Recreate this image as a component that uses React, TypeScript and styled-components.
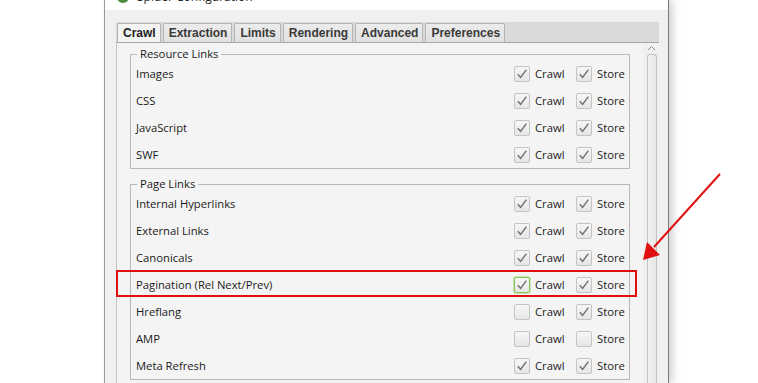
import React from 'react';
import styled, { createGlobalStyle } from 'styled-components';

const GlobalStyle = createGlobalStyle`
  html, body {
    margin: 0;
    padding: 0;
    background: #fff;
  }
  body {
    font-family: 'Open Sans', 'Noto Sans', sans-serif;
  }
`;

type Row = { label: string; crawl: boolean; store: boolean; focused?: boolean };

const resourceLinks: Row[] = [
  { label: 'Images', crawl: true, store: true },
  { label: 'CSS', crawl: true, store: true },
  { label: 'JavaScript', crawl: true, store: true },
  { label: 'SWF', crawl: true, store: true },
];

const pageLinks: Row[] = [
  { label: 'Internal Hyperlinks', crawl: true, store: true },
  { label: 'External Links', crawl: true, store: true },
  { label: 'Canonicals', crawl: true, store: true },
  { label: 'Pagination (Rel Next/Prev)', crawl: true, store: true, focused: true },
  { label: 'Hreflang', crawl: false, store: true },
  { label: 'AMP', crawl: false, store: false },
  { label: 'Meta Refresh', crawl: true, store: true },
];

const tabs = ['Crawl', 'Extraction', 'Limits', 'Rendering', 'Advanced', 'Preferences'];

function CheckBox({ checked, focused }: { checked: boolean; focused?: boolean }) {
  return (
    <Box $focused={focused}>
      {checked && (
        <svg width="12" height="12" viewBox="0 0 12 12">
          <path d="M1.8 6.2 L4.6 9.4 L10.4 1.6" fill="none" stroke="#6f6f6f" strokeWidth="1.4" />
        </svg>
      )}
    </Box>
  );
}

function Group({ title, rows }: { title: string; rows: Row[] }) {
  return (
    <Fieldset>
      <Legend>{title}</Legend>
      {rows.map(row => (
        <OptionRow key={row.label}>
          <RowLabel>{row.label}</RowLabel>
          <Option $width={62}>
            <CheckBox checked={row.crawl} focused={row.focused} />
            <span>Crawl</span>
          </Option>
          <Option $width={53}>
            <CheckBox checked={row.store} />
            <span>Store</span>
          </Option>
        </OptionRow>
      ))}
    </Fieldset>
  );
}

export default function App() {
  return (
    <Page>
      <GlobalStyle />
      <Window>
        <TitleBar>
          <TitleText>
            <TitleIcon />
            Spider Configuration
          </TitleText>
        </TitleBar>
        <WindowBody>
          <TabBar>
            {tabs.map((t, i) => (
              <Tab key={t} $active={i === 0}>
                {t}
              </Tab>
            ))}
          </TabBar>
          <TabPanel>
            <ScrollContent>
              <Group title="Resource Links" rows={resourceLinks} />
              <Group title="Page Links" rows={pageLinks} />
            </ScrollContent>
            <ScrollBar>
              <svg width="9" height="6" viewBox="0 0 9 6">
                <path d="M1 5 L4.5 1.5 L8 5" fill="none" stroke="#8a8a8a" strokeWidth="1" />
              </svg>
              <Thumb />
            </ScrollBar>
          </TabPanel>
        </WindowBody>
      </Window>
      <Highlight />
      <Arrow width="100" height="100" viewBox="0 0 100 100">
        <line x1="96" y1="2" x2="30" y2="75" stroke="#e01010" strokeWidth="2" />
        <polygon points="19,88 23,70 36,83" fill="#e01010" />
      </Arrow>
    </Page>
  );
}

const Page = styled.div`
  position: relative;
  width: 758px;
  height: 383px;
  overflow: hidden;
  background: #fff;
`;

const Window = styled.div`
  margin-left: 104px;
  width: 563px;
  height: 383px;
  display: flex;
  flex-direction: column;
  border-left: 1px solid #9a9a9a;
  border-right: 1px solid #7a7a7a;
  box-shadow: 4px 0 8px rgba(0, 0, 0, 0.18);
  background: #f0f0f0;
`;

const TitleBar = styled.div`
  height: 10px;
  overflow: hidden;
  background: #fff;
  border-bottom: 1px solid #ececec;
`;

const TitleText = styled.div`
  margin-top: -11px;
  padding-left: 12px;
  display: flex;
  align-items: center;
  gap: 8px;
  font-family: 'Open Sans', sans-serif;
  font-size: 12px;
  line-height: 16px;
  color: #222;
`;

const TitleIcon = styled.span`
  width: 12px;
  height: 12px;
  border-radius: 50%;
  background: #4a8a3a;
`;

const WindowBody = styled.div`
  flex: 1;
  padding: 11px 9px 0 11px;
  display: flex;
  flex-direction: column;
`;

const TabBar = styled.div`
  height: 20px;
  display: flex;
  align-items: flex-end;
  gap: 2px;
  padding-left: 1px;
  background: #dadada;
`;

const Tab = styled.div<{ $active?: boolean }>`
  height: 19px;
  box-sizing: border-box;
  padding: 0 4px 0 5px;
  display: flex;
  align-items: center;
  font-family: 'Liberation Sans', Arial, sans-serif;
  font-size: 12px;
  font-weight: bold;
  color: ${p => (p.$active ? '#222' : '#3a3a3a')};
  background: ${p => (p.$active ? '#f4f4f4' : 'linear-gradient(#ececec, #e0e0e0)')};
  border: 1px solid #b4b4b4;
  border-bottom: none;
  border-radius: 2px 2px 0 0;
`;

const TabPanel = styled.div`
  flex: 1;
  display: flex;
  background: #f4f4f4;
  border-top: 1px solid #a8a8a8;
  border-left: 1px solid #c4c4c4;
`;

const ScrollContent = styled.div`
  flex: 1;
  padding: 11px 13px 0 13px;
  display: flex;
  flex-direction: column;
  gap: 15px;
`;

const ScrollBar = styled.div`
  width: 16px;
  padding-top: 2px;
  display: flex;
  flex-direction: column;
  align-items: center;
  gap: 3px;
  background: #f0f0f0;
`;

const Thumb = styled.div`
  width: 8px;
  flex: 1;
  margin-left: 2px;
  border: 1px solid #c2c2c2;
  border-bottom: none;
  border-radius: 3px 3px 0 0;
  background: linear-gradient(90deg, #f2f2f2, #e6e6e6);
`;

const Fieldset = styled.div`
  position: relative;
  border: 1px solid #b8b8b8;
  padding: 5px 0 0 5px;
`;

const Legend = styled.div`
  position: absolute;
  top: -10px;
  left: 6px;
  padding: 0 3px;
  background: #f4f4f4;
  font-size: 11.25px;
  line-height: 17px;
  color: #1a1a1a;
`;

const OptionRow = styled.div`
  height: 27px;
  display: flex;
  align-items: center;
`;

const RowLabel = styled.div`
  flex: 1;
  font-size: 11.25px;
  color: #1a1a1a;
`;

const Option = styled.div<{ $width: number }>`
  width: ${p => p.$width}px;
  display: flex;
  align-items: center;
  gap: 5px;
  font-size: 11.25px;
  color: #1a1a1a;
`;

const Box = styled.div<{ $focused?: boolean }>`
  width: 16px;
  height: 16px;
  box-sizing: border-box;
  display: flex;
  align-items: center;
  justify-content: center;
  border-radius: 2px;
  border: 1px solid ${p => (p.$focused ? '#86c45a' : '#c4c4c4')};
  box-shadow: ${p => (p.$focused ? '0 0 0 1px #c8e6b0' : 'none')};
  background: linear-gradient(#f6f6f6, #e6e6e6);
`;

const Highlight = styled.div`
  position: absolute;
  left: 116px;
  top: 270px;
  width: 517px;
  height: 23px;
  border: 2px solid #e01010;
`;

const Arrow = styled.svg`
  position: absolute;
  left: 624px;
  top: 172px;
`;
